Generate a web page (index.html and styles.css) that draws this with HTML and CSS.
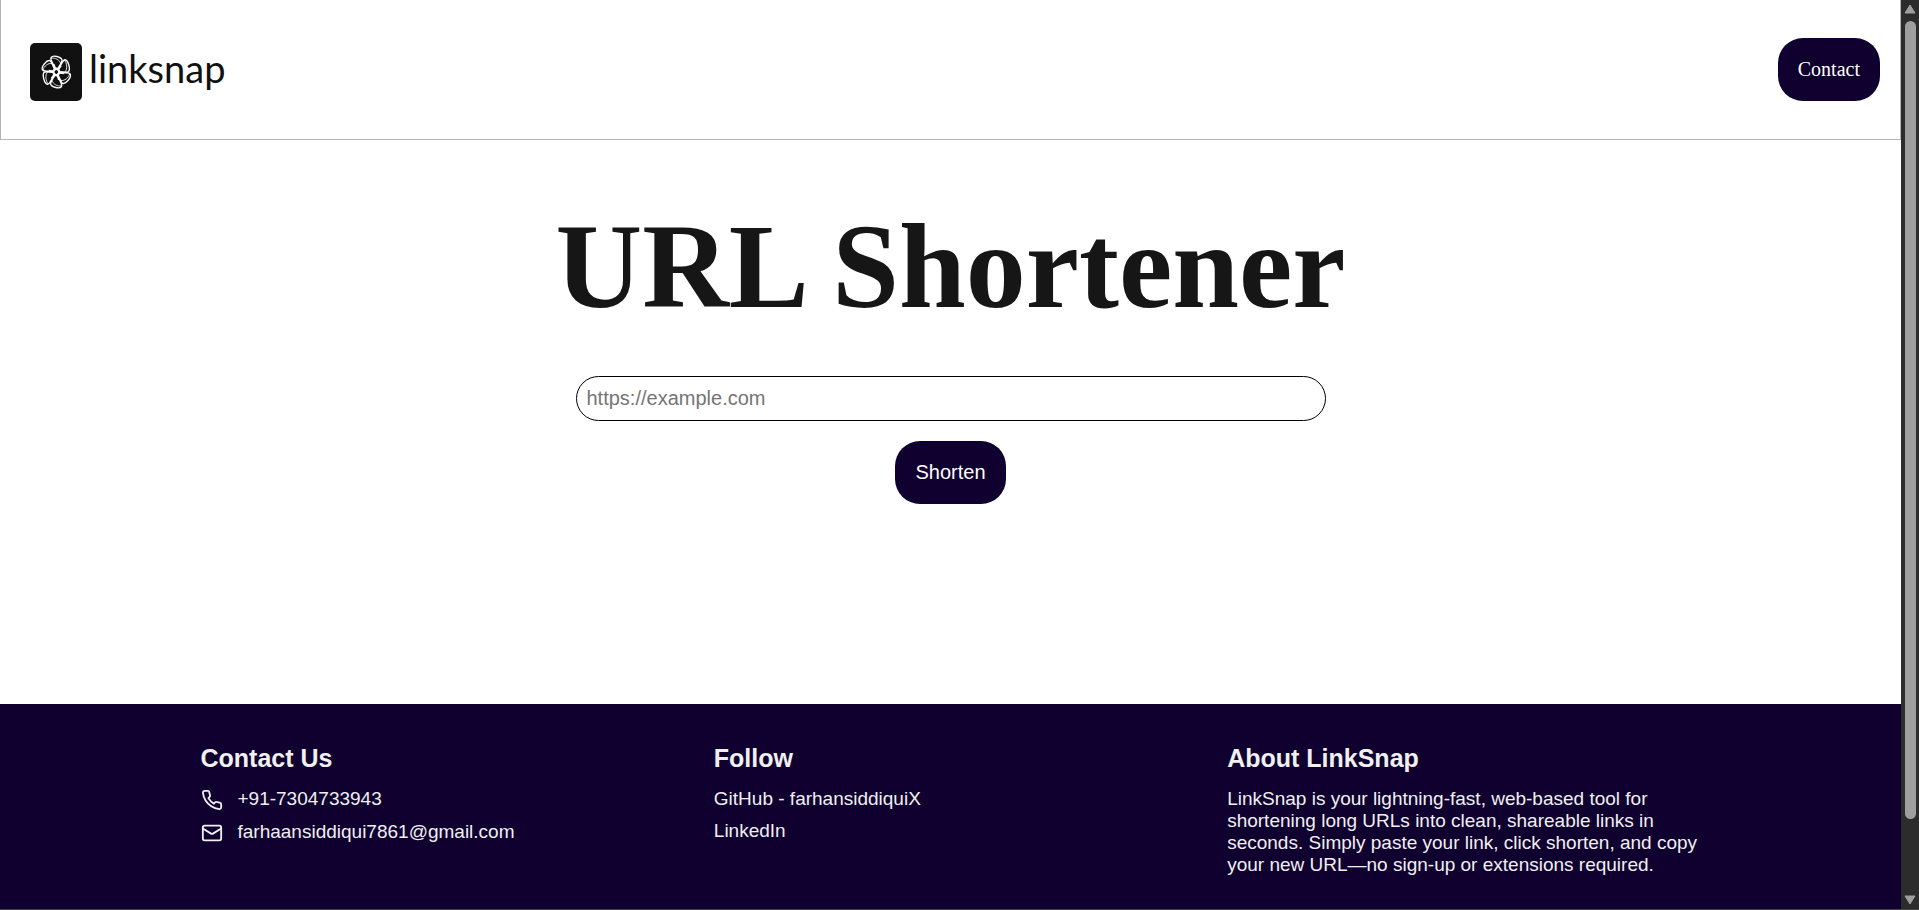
FILE: index.html
```html
<!DOCTYPE html>
<html lang="en">
<head>
<meta charset="utf-8">
<title>LinkSnap - URL Shortener</title>
<link rel="stylesheet" href="styles.css">
</head>
<body>
<div class="window">
  <div class="page">
    <header class="header">
      <a class="logo" href="#">
        <svg class="logo-mark" viewBox="0 0 52 58" aria-hidden="true">
          <rect width="52" height="58" rx="5" fill="#111"/>
          <g transform="translate(26.3 29) scale(.95 1.05)" fill="none" stroke="#fff" stroke-linejoin="round">
            <g id="petal">
              <path d="M-1.500-3C-2.500-8-7-11-5.500-13.800C-3.500-16.500 5-14.500 6-11.500C6.500-9.500 3.500-6.500 1.500-3" stroke-width="1.400"/>
              <path d="M-5.500-13C-2-14 3.500-12 4.500-8" stroke-width=".8"/>
              <path d="M-.8-2.500-2.800-7.500" stroke-width="1.800"/>
            </g>
            <use href="#petal" transform="rotate(60)"/>
            <use href="#petal" transform="rotate(120)"/>
            <use href="#petal" transform="rotate(180)"/>
            <use href="#petal" transform="rotate(240)"/>
            <use href="#petal" transform="rotate(300)"/>
            <circle r="3" stroke-width="2.400"/>
          </g>
        </svg>
        <span class="logo-text">linksnap</span>
      </a>
      <a class="button contact" href="#contact">Contact</a>
    </header>
    <main class="main">
      <h1 class="title">URL Shortener</h1>
      <form class="form">
        <input class="url-input" type="url" aria-label="URL to shorten" placeholder="https://example.com">
        <button class="button shorten" type="submit">Shorten</button>
      </form>
    </main>
    <footer class="footer" id="contact">
      <div class="columns">
        <section>
          <h2 class="heading">Contact Us</h2>
          <ul class="list">
            <li class="contact-item">
              <svg class="icon" viewBox="0 0 24 24" aria-hidden="true"><path d="M22 16.920v3a2 2 0 0 1-2.180 2 19.790 19.790 0 0 1-8.630-3.070 19.500 19.500 0 0 1-6-6 19.790 19.790 0 0 1-3.070-8.670A2 2 0 0 1 4.110 2h3a2 2 0 0 1 2 1.720 12.840 12.840 0 0 0 .7 2.810 2 2 0 0 1-.45 2.110L8.090 9.910a16 16 0 0 0 6 6l1.270-1.270a2 2 0 0 1 2.110-.45 12.840 12.840 0 0 0 2.810.7A2 2 0 0 1 22 16.920z"/></svg>
              <span>+91-7304733943</span>
            </li>
            <li class="contact-item">
              <svg class="icon" viewBox="0 0 24 24" aria-hidden="true"><rect x="2" y="4" width="20" height="16" rx="2"/><path d="m22 7-8.970 5.700a1.940 1.940 0 0 1-2.060 0L2 7"/></svg>
              <span>farhaansiddiqui7861@gmail.com</span>
            </li>
          </ul>
        </section>
        <section>
          <h2 class="heading">Follow</h2>
          <ul class="list">
            <li><a class="link" href="#">GitHub - farhansiddiquiX</a></li>
            <li><a class="link" href="#">LinkedIn</a></li>
          </ul>
        </section>
        <section>
          <h2 class="heading">About LinkSnap</h2>
          <p class="about">LinkSnap is your lightning-fast, web-based tool for shortening long URLs into clean, shareable links in seconds. Simply paste your link, click shorten, and copy your new URL—no sign-up or extensions required.</p>
        </section>
      </div>
    </footer>
  </div>
  <div class="scrollbar" aria-hidden="true">
    <svg class="arrow" viewBox="0 0 12 10"><path d="M6 1 11 9H1z"/></svg>
    <div class="track"><div class="thumb"></div></div>
    <svg class="arrow" viewBox="0 0 12 10"><path d="M6 9 1 1h10z"/></svg>
  </div>
</div>
</body>
</html>
```
FILE: styles.css
```css
* {
  box-sizing: border-box;
}

body {
  margin: 0;
  background: #fff;
  font-family: "Liberation Serif", "Times New Roman", serif;
}

.window {
  display: flex;
  height: 100vh;
  border-bottom: 1px solid #454545;
}

.page {
  flex: 1;
  min-width: 0;
  overflow: hidden;
}

.header {
  display: flex;
  align-items: center;
  justify-content: space-between;
  padding: 38px 20px 38px 29px;
  border: 1px solid #b4b4b4;
  border-top: 0;
}

.logo {
  display: flex;
  align-items: flex-start;
  gap: 7px;
  color: #111;
  text-decoration: none;
}

.logo-mark {
  width: 52px;
  height: 58px;
  margin-top: 5px;
}

.logo-text {
  font: 38px/60px Lato, sans-serif;
}

.button {
  padding: 20px;
  border: 0;
  border-radius: 25px;
  background: #0f0030;
  color: #fff;
  font-size: 20px;
  line-height: 23px;
  text-decoration: none;
}

.main {
  padding: 58px 20px 200px;
}

.title {
  margin: 0 0 40px;
  color: #161616;
  font-size: 120px;
  line-height: 138px;
  text-align: center;
}

.form {
  display: flex;
  flex-direction: column;
  align-items: center;
  gap: 20px;
}

.url-input {
  width: 100%;
  max-width: 750px;
  padding: 10px;
  border: 1px solid #000;
  border-radius: 25px;
  background: #fff;
  font: 20px/23px "Liberation Sans", Arial, sans-serif;
}

.url-input::placeholder {
  color: #757575;
}

.shorten {
  font-family: "Liberation Sans", Arial, sans-serif;
}

.footer {
  padding: 40px 20px;
  background: #0f0030;
  color: #f0f0f0;
  font: 19px/22px "Liberation Sans", Arial, sans-serif;
}

.columns {
  display: grid;
  grid-template-columns: repeat(3, 1fr);
  gap: 40px;
  max-width: 1500px;
  margin: 0 auto;
}

.heading {
  margin: 0 0 15px;
  font-size: 25px;
  line-height: 29px;
}

.list {
  display: flex;
  flex-direction: column;
  gap: 10px;
  margin: 0;
  padding: 0;
  list-style: none;
}

.contact-item {
  display: flex;
  align-items: flex-start;
  gap: 15px;
}

.icon {
  width: 22px;
  height: 22px;
  margin-top: 1px;
  fill: none;
  stroke: currentColor;
  stroke-width: 2;
  stroke-linecap: round;
  stroke-linejoin: round;
}

.link {
  color: inherit;
  text-decoration: none;
}

.about {
  margin: 0;
}

.scrollbar {
  display: flex;
  flex-direction: column;
  align-items: center;
  gap: 7px;
  width: 18px;
  padding: 4px 0;
  background: #2c2c2c;
}

.arrow {
  width: 12px;
  height: 10px;
  fill: #9f9f9f;
  stroke: #9f9f9f;
  stroke-width: 1;
  stroke-linejoin: round;
}

.track {
  flex: 1;
  width: 11px;
}

.thumb {
  height: 92%;
  border-radius: 6px;
  background: #9f9f9f;
}
```
